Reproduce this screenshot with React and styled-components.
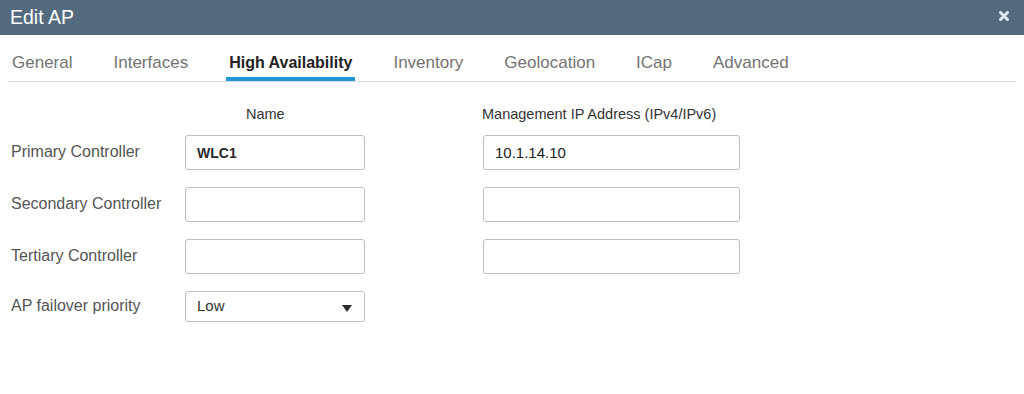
import { Fragment } from "react";
import styled, { createGlobalStyle } from "styled-components";

const GlobalStyle = createGlobalStyle`
  html, body {
    margin: 0;
    padding: 0;
    background: #ffffff;
  }
  body {
    font-family: "Liberation Sans", Arial, sans-serif;
  }
  * {
    box-sizing: border-box;
  }
`;

const Dialog = styled.div`
  width: 1024px;
  height: 394px;
  background: #ffffff;
  overflow: hidden;
`;

const TitleBar = styled.header`
  height: 35px;
  background: #546a7f;
  border-bottom: 1px solid #4c6174;
  display: flex;
  align-items: center;
  justify-content: space-between;
  padding: 0 14px 0 10px;
`;

const Title = styled.h1`
  margin: 0;
  font-size: 19.5px;
  font-weight: 400;
  line-height: 34px;
  color: #ffffff;
`;

const CloseButton = styled.button`
  border: 0;
  background: none;
  padding: 0;
  width: 12px;
  height: 12px;
  display: flex;
  align-items: center;
  justify-content: center;
  cursor: pointer;
  margin-top: -2px;
`;

const TabBar = styled.nav`
  display: flex;
  gap: 35px;
  margin: 0 8px;
  padding: 0 1px;
  border-bottom: 1px solid #dadddf;
`;

const Tab = styled.div`
  padding: 18px 3px 4px;
  line-height: 20px;
  font-size: ${(p) => (p.$active ? "16px" : "17px")};
  font-weight: ${(p) => (p.$active ? 700 : 400)};
  color: ${(p) => (p.$active ? "#222222" : "#737373")};
  border-bottom: 4px solid ${(p) => (p.$active ? "#1d96d1" : "transparent")};
  white-space: nowrap;
  cursor: pointer;
`;

const Body = styled.section`
  padding: 23px 0 0 11px;
`;

const columns = `
  display: grid;
  grid-template-columns: 174px 298px 257px;
  align-items: center;
`;

const HeadRow = styled.div`
  ${columns}
  margin-bottom: 12px;
`;

const ColHead = styled.div`
  font-size: 14.5px;
  line-height: 18px;
  color: #333333;
  padding-left: ${(p) => p.$indent || 0}px;
  margin-left: ${(p) => p.$shift || 0}px;
  white-space: nowrap;
`;

const FieldGrid = styled.div`
  ${columns}
  row-gap: 17px;
`;

const Label = styled.label`
  font-size: 16px;
  color: #555555;
  white-space: nowrap;
  margin-top: -2px;
`;

const Input = styled.input`
  width: ${(p) => p.$width}px;
  height: 35px;
  border: 1px solid #b7bec4;
  border-radius: 3px;
  padding: 0 11px;
  font-family: inherit;
  font-size: ${(p) => (p.$strong ? "14px" : "15px")};
  font-weight: ${(p) => (p.$strong ? 700 : 400)};
  color: ${(p) => (p.$strong ? "#2a2a2a" : "#222222")};
  background: #ffffff;
  outline: none;
`;

const Select = styled.div`
  width: 180px;
  height: 31px;
  border: 1px solid #b7bec4;
  border-radius: 3px;
  padding: 0 12px 0 11px;
  display: flex;
  align-items: center;
  justify-content: space-between;
  font-size: 15px;
  color: #333333;
  cursor: pointer;

  span {
    margin-top: -3px;
  }
`;

const Caret = styled.svg`
  width: 10px;
  height: 7px;
  margin-top: 4px;
`;

const tabs = [
  "General",
  "Interfaces",
  "High Availability",
  "Inventory",
  "Geolocation",
  "ICap",
  "Advanced",
];

const controllers = [
  { label: "Primary Controller", name: "WLC1", ip: "10.1.14.10" },
  { label: "Secondary Controller", name: "", ip: "" },
  { label: "Tertiary Controller", name: "", ip: "" },
];

const App = () => {
  return (
    <>
      <GlobalStyle />
      <Dialog>
        <TitleBar>
          <Title>Edit AP</Title>
          <CloseButton aria-label="Close">
            <svg width="10" height="10" viewBox="0 0 10 10">
              <path
                d="M1.5 1.5 L8.5 8.5 M8.5 1.5 L1.5 8.5"
                stroke="#e4e9ee"
                strokeWidth="3"
                strokeLinecap="square"
              />
            </svg>
          </CloseButton>
        </TitleBar>

        <TabBar>
          {tabs.map((tab) => (
            <Tab key={tab} $active={tab === "High Availability"}>
              {tab}
            </Tab>
          ))}
        </TabBar>

        <Body>
          <HeadRow>
            <span />
            <ColHead $indent={61}>Name</ColHead>
            <ColHead $shift={-1}>Management IP Address (IPv4/IPv6)</ColHead>
          </HeadRow>

          <FieldGrid>
            {controllers.map((c) => (
              <Fragment key={c.label}>
                <Label>{c.label}</Label>
                <Input $width={180} $strong defaultValue={c.name} />
                <Input $width={257} defaultValue={c.ip} />
              </Fragment>
            ))}
            <Label>AP failover priority</Label>
            <Select>
              <span>Low</span>
              <Caret viewBox="0 0 10 7">
                <path d="M0 0 L10 0 L5 7 Z" fill="#2b2b2b" />
              </Caret>
            </Select>
          </FieldGrid>
        </Body>
      </Dialog>
    </>
  );
};

export default App;
